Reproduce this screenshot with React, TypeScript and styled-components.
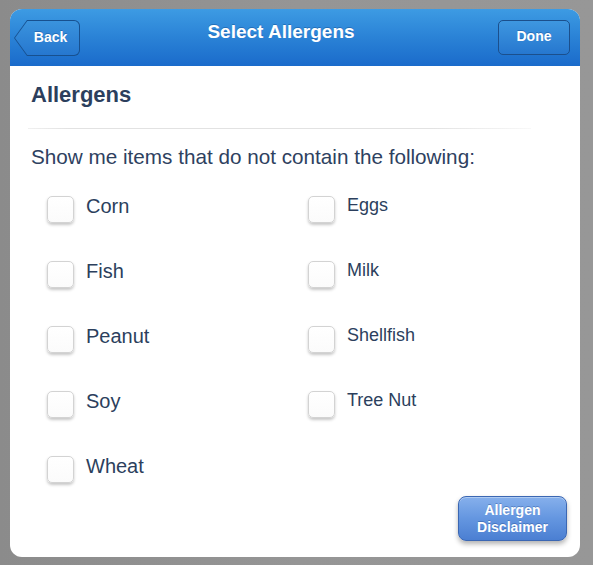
import React from "react";
import styled, { createGlobalStyle } from "styled-components";

const GlobalStyle = createGlobalStyle`
  html, body {
    margin: 0;
    padding: 0;
    background: #929292;
  }
  body {
    font-family: "Liberation Sans", Arial, Helvetica, sans-serif;
  }
`;

const Backdrop = styled.div`
  width: 593px;
  height: 565px;
  box-sizing: border-box;
  padding: 9px 13px 8px 10px;
  background: linear-gradient(90deg, #8b8b8b 0%, #959595 50%, #979797 100%);
`;

const Modal = styled.div`
  width: 570px;
  height: 548px;
  background: #fff;
  border-radius: 12px;
  overflow: hidden;
  display: flex;
  flex-direction: column;
`;

const Header = styled.header`
  height: 57px;
  flex: none;
  display: grid;
  grid-template-columns: 1fr auto 1fr;
  align-items: center;
  padding: 0 10px 0 4px;
  background: linear-gradient(180deg, #3d9be3 0%, #2a82d6 50%, #1a6bcb 100%);
`;

const Title = styled.h1`
  margin: 0 22px 12px 0;
  font-size: 19px;
  font-weight: bold;
  color: #fff;
  text-shadow: 0 -1px 0 rgba(0, 40, 100, 0.3);
`;

const BackButton = styled.button`
  justify-self: start;
  position: relative;
  width: 66px;
  height: 36px;
  margin-top: 1px;
  padding: 0;
  border: none;
  background: #17508f;
  border-radius: 0 6px 6px 0;
  clip-path: polygon(0 50%, 13px 0, 100% 0, 100% 100%, 13px 100%);
  cursor: pointer;
`;

const BackFill = styled.span`
  position: absolute;
  inset: 1px 1px 1px 1px;
  border-radius: 0 5px 5px 0;
  clip-path: polygon(0 50%, 12.3px 0, 100% 0, 100% 100%, 12.3px 100%);
  background: linear-gradient(180deg, #3a93dd 0%, #2677cf 100%);
  display: flex;
  align-items: center;
  justify-content: center;
  padding: 0 0 3px 7px;
  box-sizing: border-box;
  color: #fff;
  font-family: "Liberation Sans", Arial, sans-serif;
  font-size: 14px;
  font-weight: bold;
  text-shadow: 0 -1px 0 rgba(0, 40, 100, 0.3);
`;

const DoneButton = styled.button`
  justify-self: end;
  width: 72px;
  height: 35px;
  margin-top: -1px;
  padding: 0 0 2px;
  border: 1px solid #1b4f8c;
  border-radius: 5px;
  background: linear-gradient(180deg, #3e97e0 0%, #2677cf 100%);
  color: #fff;
  font-family: "Liberation Sans", Arial, sans-serif;
  font-size: 14px;
  font-weight: bold;
  text-shadow: 0 -1px 0 rgba(0, 40, 100, 0.3);
  cursor: pointer;
`;

const Body = styled.div`
  flex: 1;
  display: flex;
  flex-direction: column;
  padding: 16px 13px 16px 21px;
`;

const SectionTitle = styled.h2`
  margin: 0;
  font-size: 22px;
  line-height: 26px;
  font-weight: bold;
  color: #2c3f5d;
`;

const Rule = styled.div`
  height: 1px;
  margin: 20px 36px 0 -3px;
  background: linear-gradient(90deg, #f0f0f0 0%, #e2e2e2 8%, #e2e2e2 80%, #f8f8f8 100%);
`;

const Prompt = styled.p`
  margin: 16px 0 0;
  font-size: 20.7px;
  line-height: 24px;
  color: #2e4160;
`;

const Options = styled.div`
  display: grid;
  grid-template-columns: 261px 1fr;
  row-gap: 38px;
  margin: 27px 0 0 16px;
`;

const Option = styled.label`
  display: flex;
  align-items: flex-start;
  gap: 12px;
  height: 27px;
  cursor: pointer;
`;

const Box = styled.span`
  flex: none;
  width: 25px;
  height: 25px;
  border: 1px solid #d3d3d3;
  border-radius: 5px;
  background: linear-gradient(180deg, #ffffff 0%, #fbfbfb 100%);
  box-shadow: 0 2px 3px rgba(0, 0, 0, 0.22);
`;

const OptionText = styled.span<{ $small?: boolean }>`
  font-size: ${({ $small }) => ($small ? "18px" : "20px")};
  line-height: ${({ $small }) => ($small ? "18px" : "20px")};
  color: #2c3f5d;
`;

const Footer = styled.div`
  margin-top: auto;
  display: flex;
  justify-content: flex-end;
`;

const DisclaimerButton = styled.button`
  width: 109px;
  height: 45px;
  border: 1px solid #3b67b3;
  border-radius: 8px;
  background: linear-gradient(180deg, #86b0ec 0%, #6496e0 50%, #4b7fd2 100%);
  box-shadow: 0 3px 5px rgba(0, 0, 0, 0.3), inset 0 1px 0 rgba(255, 255, 255, 0.35);
  color: #fff;
  font-family: "Liberation Sans", Arial, sans-serif;
  font-size: 14px;
  font-weight: bold;
  line-height: 17px;
  text-shadow: 0 -1px 0 rgba(20, 60, 130, 0.35);
  cursor: pointer;
`;

const left = ["Corn", "Fish", "Peanut", "Soy", "Wheat"];
const right = ["Eggs", "Milk", "Shellfish", "Tree Nut"];

export default function App() {
  const cells: React.ReactNode[] = [];
  left.forEach((name, i) => {
    cells.push(
      <Option key={name}>
        <Box />
        <OptionText>{name}</OptionText>
      </Option>
    );
    if (right[i]) {
      cells.push(
        <Option key={right[i]}>
          <Box />
          <OptionText $small>{right[i]}</OptionText>
        </Option>
      );
    }
  });

  return (
    <>
      <GlobalStyle />
      <Backdrop>
        <Modal>
          <Header>
            <BackButton>
              <BackFill>Back</BackFill>
            </BackButton>
            <Title>Select Allergens</Title>
            <DoneButton>Done</DoneButton>
          </Header>
          <Body>
            <SectionTitle>Allergens</SectionTitle>
            <Rule />
            <Prompt>Show me items that do not contain the following:</Prompt>
            <Options>{cells}</Options>
            <Footer>
              <DisclaimerButton>
                Allergen
                <br />
                Disclaimer
              </DisclaimerButton>
            </Footer>
          </Body>
        </Modal>
      </Backdrop>
    </>
  );
}
